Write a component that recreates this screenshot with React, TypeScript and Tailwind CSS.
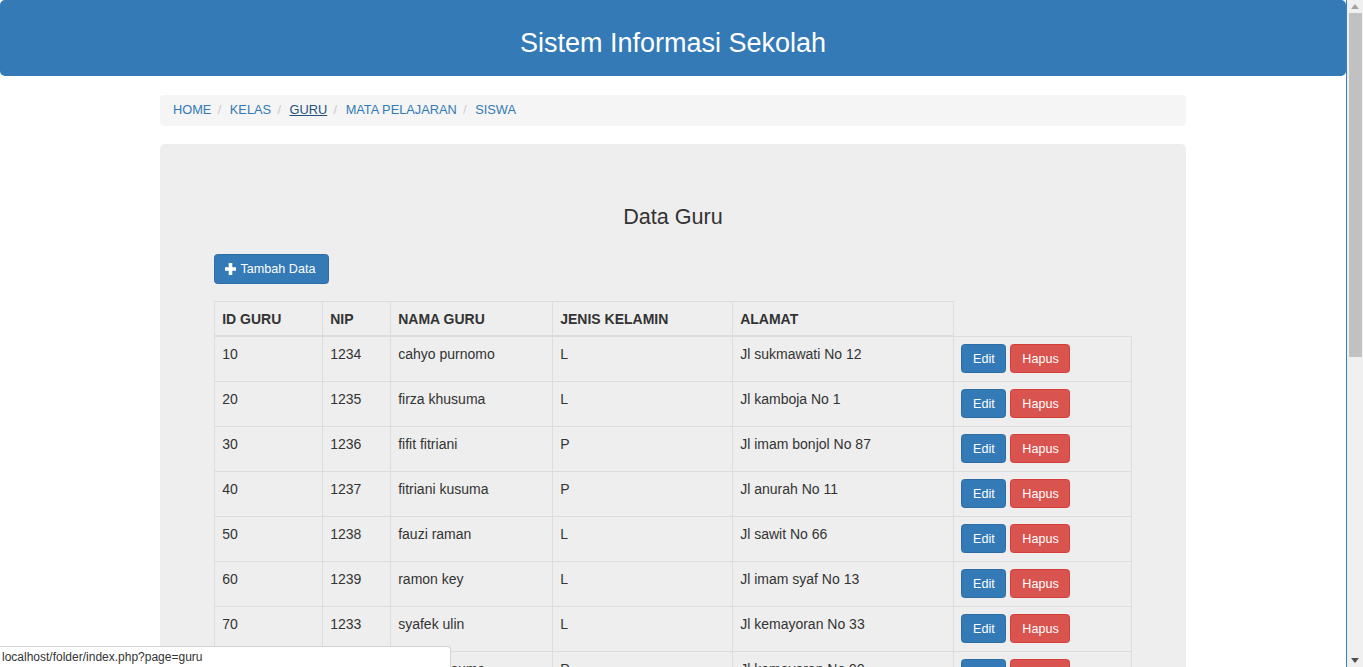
import React from 'react';

// Data guru (tabel utama)
const rows = [
  { id: '10', nip: '1234', nama: 'cahyo purnomo', jk: 'L', alamat: 'Jl sukmawati No 12' },
  { id: '20', nip: '1235', nama: 'firza khusuma', jk: 'L', alamat: 'Jl kamboja No 1' },
  { id: '30', nip: '1236', nama: 'fifit fitriani', jk: 'P', alamat: 'Jl imam bonjol No 87' },
  { id: '40', nip: '1237', nama: 'fitriani kusuma', jk: 'P', alamat: 'Jl anurah No 11' },
  { id: '50', nip: '1238', nama: 'fauzi raman', jk: 'L', alamat: 'Jl sawit No 66' },
  { id: '60', nip: '1239', nama: 'ramon key', jk: 'L', alamat: 'Jl imam syaf No 13' },
  { id: '70', nip: '1233', nama: 'syafek ulin', jk: 'L', alamat: 'Jl kemayoran No 33' },
  { id: '80', nip: '1240', nama: 'indah kusuma', jk: 'P', alamat: 'Jl kemayoran No 99' },
];

const crumbs = ['HOME', 'KELAS', 'GURU', 'MATA PELAJARAN', 'SISWA'];

function PlusIcon() {
  return (
    <svg width="11" height="12" viewBox="0 0 11 12" aria-hidden="true" className="shrink-0">
      <path d="M3.7 0h3.6v4.2H11v3.6H7.3V12H3.7V7.8H0V4.2h3.7z" fill="#fff" />
    </svg>
  );
}

function Scrollbar() {
  return (
    <div className="w-[16px] h-screen bg-[#f0f0f0] flex flex-col shrink-0">
      <div className="h-[13px] flex items-center justify-center">
        <svg width="8" height="5" viewBox="0 0 8 5"><path d="M4 0L8 5H0z" fill="#a3a3a3" /></svg>
      </div>
      <div className="ml-[2px] w-[13px] h-[344px] bg-[#c1c1c1]" />
      <div className="flex-1" />
      <div className="h-[14px] flex items-center justify-center">
        <svg width="8" height="5" viewBox="0 0 8 5"><path d="M0 0H8L4 5z" fill="#505050" /></svg>
      </div>
    </div>
  );
}

export default function App() {
  return (
    <div
      className="flex h-screen w-full overflow-hidden bg-white text-[#333] text-[12.6px] leading-[18px]"
      style={{ fontFamily: '"Liberation Sans", Arial, Helvetica, sans-serif' }}
    >
      <div className="w-[1347px] h-screen overflow-hidden border-r border-[#3a7fc4] shrink-0">
        <header className="h-[76px] w-full bg-[#337ab7] rounded-[5px] text-white text-center pt-[29px]">
          <h2 className="text-[27px] leading-[1.1]">Sistem Informasi Sekolah</h2>
        </header>

        <div className="w-[1026px] mx-auto">
          <ol className="mt-[19px] h-[31px] px-[13px] pb-[1px] flex items-center bg-[#f5f5f5] rounded-[4px] text-[12.8px]">
            {crumbs.map((c, i) => (
              <li key={c} className="flex items-center">
                {i > 0 && <span className="text-[#ccc] ml-[1.3px] mr-[5px] pl-[5px]">/&nbsp;</span>}
                <a
                  href="#"
                  className={c === 'GURU' ? 'text-[#23527c] underline' : 'text-[#337ab7]'}
                >
                  {c}
                </a>
              </li>
            ))}
          </ol>

          <div className="mt-[18px] bg-[#eee] rounded-[5px] px-[54px] pt-[43px] pb-[43px]">
            <h3 className="mt-[18px] text-[21.6px] leading-[1.1] text-center">Data Guru</h3>

            <button className="mt-[25px] h-[30px] pl-[10px] pr-[13px] flex items-center gap-[4.5px] bg-[#337ab7] border border-[#2e6da4] rounded-[3.5px] text-white">
              <PlusIcon />
              <span>Tambah Data</span>
            </button>

            <table className="mt-[17px] w-[917px] table-fixed border-collapse text-[14px]">
              <colgroup>
                <col className="w-[108px]" />
                <col className="w-[68px]" />
                <col className="w-[162px]" />
                <col className="w-[180px]" />
                <col className="w-[221px]" />
                <col className="w-[178px]" />
              </colgroup>
              <thead>
                <tr className="h-[35px]">
                  {['ID GURU', 'NIP', 'NAMA GURU', 'JENIS KELAMIN', 'ALAMAT'].map((h) => (
                    <th
                      key={h}
                      className="border border-[#ddd] border-b-2 px-[7.2px] pt-[6px] pb-[7px] text-left align-bottom font-bold"
                    >
                      {h}
                    </th>
                  ))}
                </tr>
              </thead>
              <tbody>
                {rows.map((r) => (
                  <tr key={r.id} className="h-[45px]">
                    <td className="border border-[#ddd] px-[7.2px] pt-[8px] pb-[6px] align-top">{r.id}</td>
                    <td className="border border-[#ddd] px-[7.2px] pt-[8px] pb-[6px] align-top">{r.nip}</td>
                    <td className="border border-[#ddd] px-[7.2px] pt-[8px] pb-[6px] align-top">{r.nama}</td>
                    <td className="border border-[#ddd] px-[7.2px] pt-[8px] pb-[6px] align-top">{r.jk}</td>
                    <td className="border border-[#ddd] px-[7.2px] pt-[8px] pb-[6px] align-top">{r.alamat}</td>
                    <td className="border border-[#ddd] px-[7.2px] pt-[7px] pb-[6px] align-top text-[12.6px]">
                      <div className="flex gap-[4px]">
                        <button className="h-[29.5px] px-[10.8px] bg-[#337ab7] border border-[#2e6da4] rounded-[3.5px] text-white">
                          Edit
                        </button>
                        <button className="h-[29.5px] px-[10.8px] bg-[#d9534f] border border-[#d43f3a] rounded-[3.5px] text-white">
                          Hapus
                        </button>
                      </div>
                    </td>
                  </tr>
                ))}
              </tbody>
            </table>
          </div>
        </div>
      </div>

      <Scrollbar />

      {/* status bar browser */}
      <div className="fixed left-0 bottom-0 w-[451px] h-[21px] bg-white border-t border-r border-[#d4d4d4] rounded-tr-[3px] pl-[2px] flex items-center text-[12px] text-[#333]">
        localhost/folder/index.php?page=guru
      </div>
    </div>
  );
}
